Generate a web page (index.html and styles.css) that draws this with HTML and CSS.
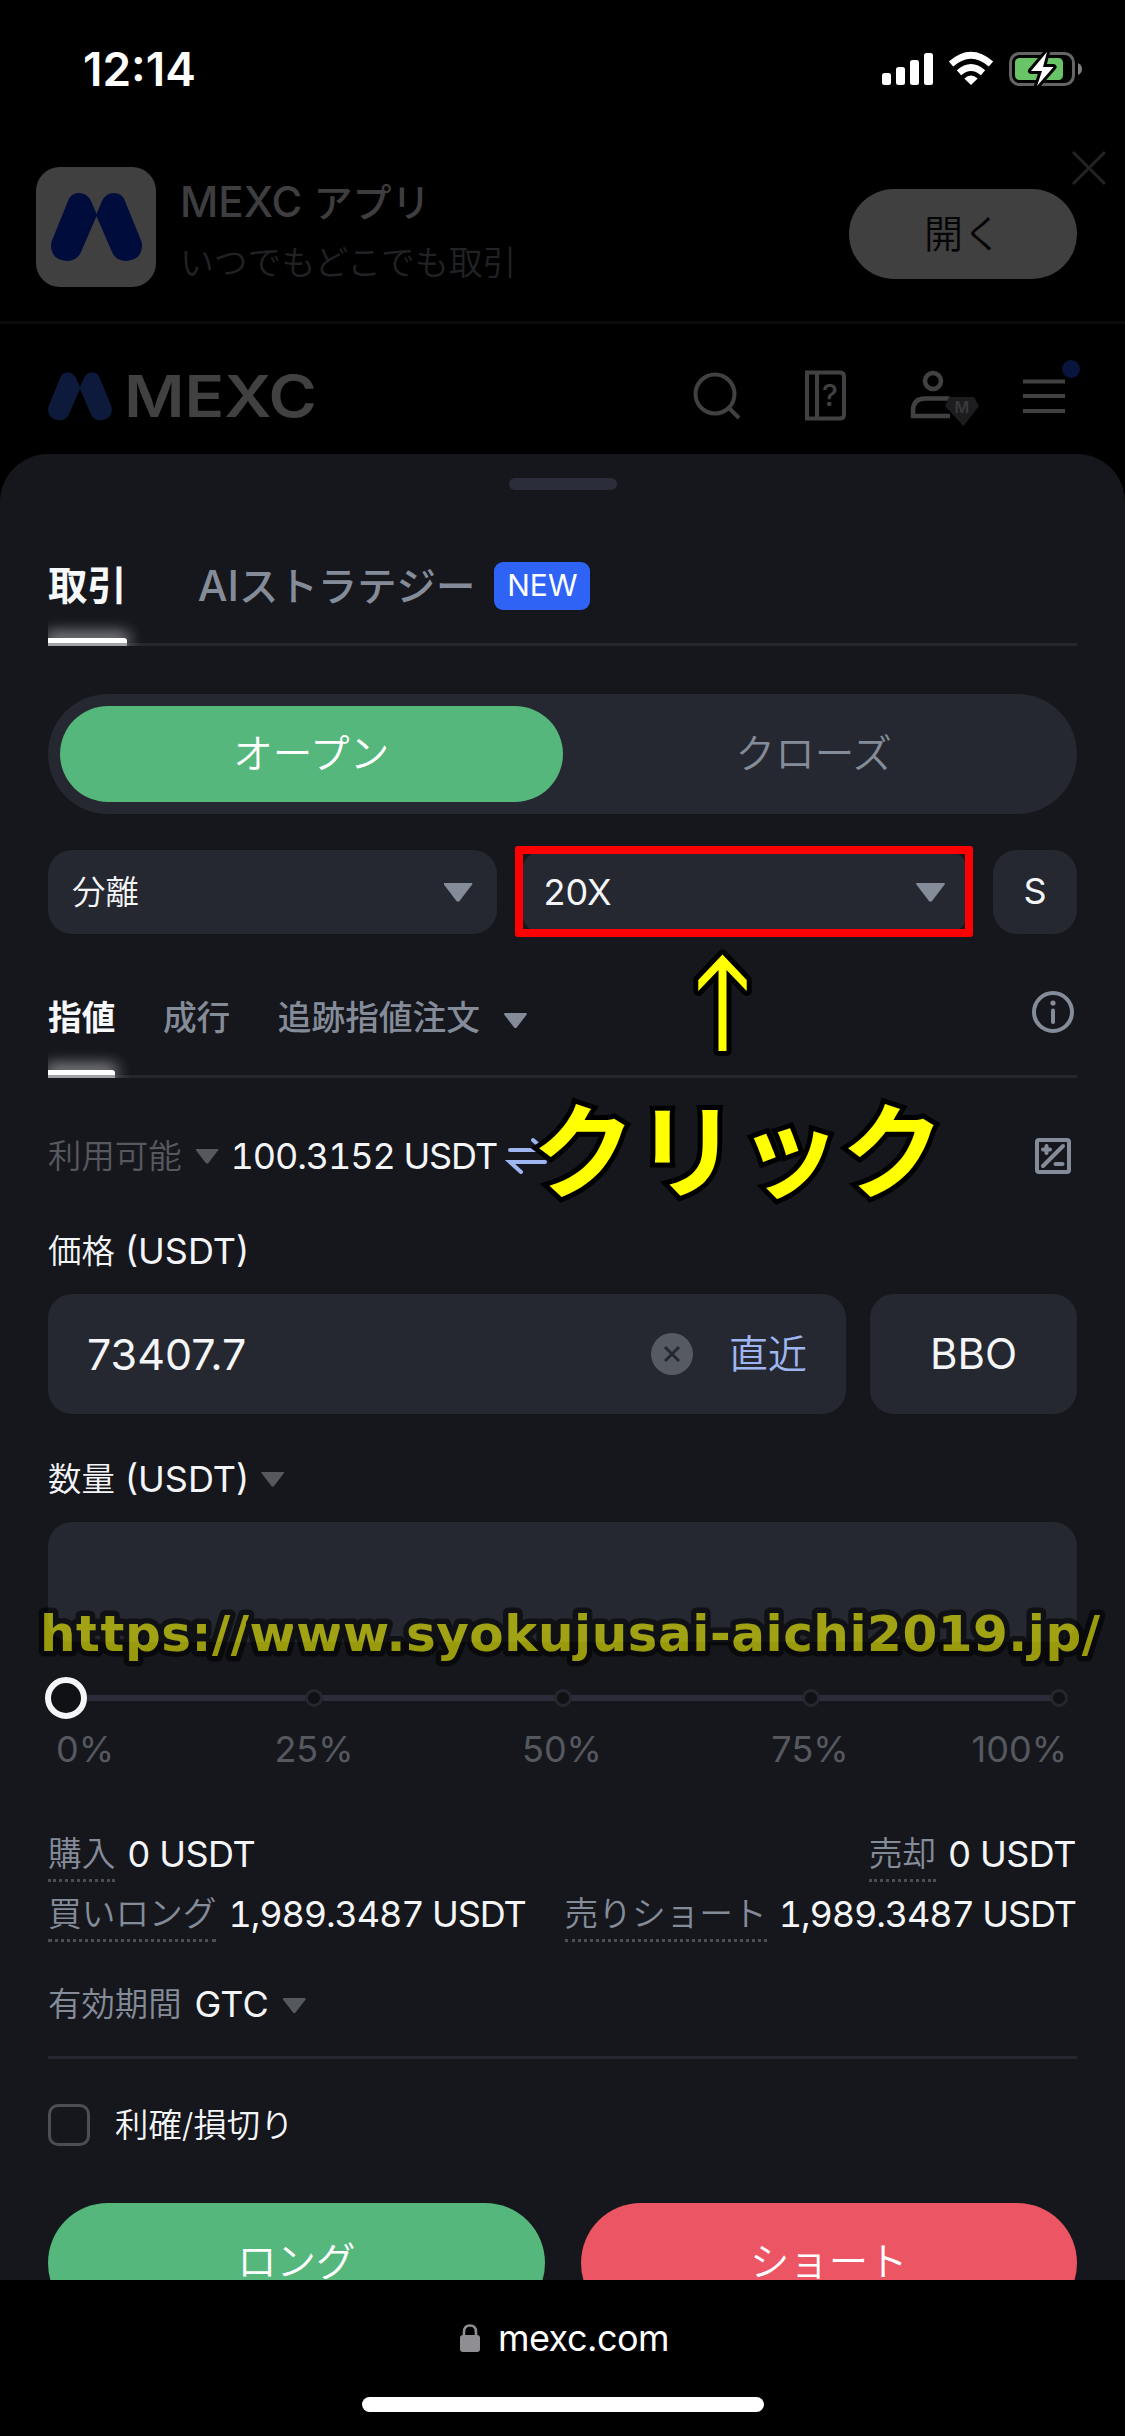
FILE: index.html
```html
<!DOCTYPE html>
<html lang="ja">
<head>
<meta charset="utf-8">
<title>MEXC</title>
<link rel="stylesheet" href="styles.css">
</head>
<body>
<div class="phone">
  <div class="status">
    <span class="clock">12:14</span>
    <svg class="status-icons" width="204" height="40" viewBox="0 0 204 40">
      <g fill="#fff">
        <rect x="2" y="24" width="9" height="12" rx="2.5"/><rect x="16" y="18" width="9" height="18" rx="2.5"/><rect x="30" y="11" width="9" height="25" rx="2.5"/><rect x="44" y="4" width="9" height="32" rx="2.5"/>
        <path d="M91 36 L84.3 29.4 Q91 23.6 97.7 29.4 Z"/>
      </g>
      <g fill="none" stroke="#fff" stroke-width="6.6"><path d="M79 23.8 Q91 13.2 103 23.8"/><path d="M71 15 Q91 -2.6 111 15"/></g>
      <rect x="130.500" y="4.500" width="63" height="31" rx="9" fill="none" stroke="#656565" stroke-width="3"/>
      <path d="M198 14 q4 2 4 6 q0 4 -4 6z" fill="#808080"/>
      <rect x="135" y="9" width="48" height="22" rx="4.500" fill="#68c466"/>
      <path d="M167 3 L151 22 L162 22 L157 37 L173.500 18 L163 18 Z" fill="#fff" stroke="#000" stroke-width="6" stroke-linejoin="round" paint-order="stroke"/>
    </svg>
  </div>

  <div class="promo">
    <svg class="app-icon" width="120" height="120" viewBox="0 0 120 120">
      <rect width="120" height="120" rx="24" fill="#404040"/>
      <g fill="#000c3c"><path d="M43 26 Q51 26 55 34 L61 48 L45 85 Q41 94 31 94 Q15 93 15 78 Q15 75 17 71 L32 34 Q35 26 43 26Z"/><path d="M78 26 Q70 26 66 34 L60 48 L76 85 Q80 94 90 94 Q106 93 106 78 Q106 75 104 71 L89 34 Q86 26 78 26Z"/></g>
    </svg>
    <div class="promo-copy">
      <div class="promo-title">MEXC <span class="ja39">アプリ</span></div>
      <div class="promo-sub">いつでもどこでも取引</div>
    </div>
    <div class="open-btn">開く</div>
    <svg class="close" width="34" height="34" viewBox="0 0 34 34"><path d="M1 1 33 33M33 1 1 33" stroke="#222326" stroke-width="3"/></svg>
  </div>

  <div class="site-head">
    <svg class="brand" width="280" height="66" viewBox="0 -6 280 66">
      <g transform="translate(-10.400 -17.600) scale(.7)" fill="#0d1a3c"><path d="M43 26 Q51 26 55 34 L61 48 L45 85 Q41 94 31 94 Q15 93 15 78 Q15 75 17 71 L32 34 Q35 26 43 26Z"/><path d="M78 26 Q70 26 66 34 L60 48 L76 85 Q80 94 90 94 Q106 93 106 78 Q106 75 104 71 L89 34 Q86 26 78 26Z"/></g>
      <text x="76" y="45" textLength="193" lengthAdjust="spacingAndGlyphs" class="wordmark">MEXC</text>
    </svg>
    <svg class="head-icons" width="400" height="66" viewBox="0 0 400 66" fill="none" stroke="#414141" stroke-width="4">
      <circle cx="35" cy="34" r="19.500"/><path d="M49 48 L59 58"/>
      <path d="M127 12.500H160Q164 12.500 164 16.500V54.500Q164 58.500 160 58.500H127Z M137 12V59"/>
      <text x="150" y="46" text-anchor="middle" class="q">?</text>
      <circle cx="253" cy="21" r="8" stroke-width="4.500"/><path d="M270 38.500H245Q233 38.500 233 51V56H270" stroke-width="4.500"/>
      <path d="M269 37H294L299 46L283.500 66L265 46Z" fill="#1d1d20" stroke="none"/>
      <text x="282" y="53" text-anchor="middle" class="gem">M</text>
      <path d="M343 21.500H385M343 36H385M343 51H385"/>
      <circle cx="391" cy="9" r="9" fill="#08153c" stroke="none"/>
    </svg>
  </div>

  <div class="sheet">
    <div class="handle"></div>
    <div class="tabs main-tabs">
      <span class="tab on">取引</span>
      <span class="tab ai"><span class="lat">AI</span>ストラテジー</span>
      <span class="new">NEW</span>
    </div>
    <div class="segment"><div class="seg on">オープン</div><div class="seg">クローズ</div></div>
    <div class="selects">
      <div class="select"><span class="ja">分離</span><i class="tri big"></i></div>
      <div class="select"><span class="lev">20X</span><i class="tri big"></i><span class="mark"></span></div>
      <div class="size">S</div>
    </div>
    <div class="tabs order-tabs">
      <span class="tab on">指値</span><span class="tab">成行</span><span class="tab">追跡指値注文</span><i class="tri mid"></i>
      <svg class="info" width="44" height="44" viewBox="0 0 44 44" fill="none" stroke="#858c99" stroke-width="4" stroke-linecap="round"><circle cx="22" cy="22" r="19"/><path d="M22 20.500V32"/><circle cx="22" cy="13" r="2.600" fill="#858c99" stroke="none"/></svg>
    </div>
    <div class="balance">
      <span class="ja dim">利用可能</span><i class="tri dimtri"></i><span class="amount num">100.3152 USDT</span>
      <svg class="swap" width="40" height="36" viewBox="0 0 40 36" fill="none" stroke="#9eb5f2" stroke-width="4" stroke-linecap="round"><path d="M2 12H36L25 2M37 24H2L13 34"/></svg>
      <svg class="calc" width="36" height="36" viewBox="0 0 36 36" fill="none" stroke="#858c99" stroke-width="4" stroke-linecap="round"><rect x="2" y="2" width="32" height="32" rx="2"/><path d="M28 8 8 28M8 11.500H15M11.500 8V15M20.500 26H27.500"/></svg>
    </div>
    <div class="label price-label"><span class="ja">価格</span> (USDT)</div>
    <div class="price-row">
      <div class="input"><span class="price">73407.7</span>
        <svg class="clear" width="42" height="42" viewBox="0 0 42 42"><circle cx="21" cy="21" r="21" fill="#565a61"/><path d="M14 14 28 28M28 14 14 28" stroke="#252830" stroke-width="3"/></svg>
        <span class="last">直近</span></div>
      <div class="bbo">BBO</div>
    </div>
    <div class="label qty-label"><span class="ja">数量</span> (USDT)<i class="tri dimtri"></i></div>
    <div class="qty"></div>
    <div class="slider"><i class="thumb"></i><i class="dot"></i><i class="dot"></i><i class="dot"></i><i class="dot"></i></div>
    <div class="ticks"><span>0%</span><span>25%</span><span>50%</span><span>75%</span><span>100%</span></div>
    <div class="stats first"><div><span class="term">購入</span>0 USDT</div><div><span class="term">売却</span>0 USDT</div></div>
    <div class="stats num"><div><span class="term">買いロング</span>1,989.3487 USDT</div><div><span class="term">売りショート</span>1,989.3487 USDT</div></div>
    <div class="validity"><span class="ja">有効期間</span><span class="gtc">GTC</span><i class="tri dimtri"></i></div>
    <div class="tpsl"><i class="check"></i><span class="ja">利確/損切り</span></div>
    <div class="actions"><div class="long">ロング</div><div class="short">ショート</div></div>
  </div>

  <div class="browser">
    <div class="address"><svg width="20" height="28" viewBox="0 0 20 28"><rect x="0" y="11" width="20" height="17" rx="3" fill="#8e8e93"/><path d="M4 12V8Q4 1.500 10 1.500Q16 1.500 16 8V12" fill="none" stroke="#8e8e93" stroke-width="2.600"/></svg><span>mexc.com</span></div>
    <div class="home"></div>
  </div>

  <svg class="arrow" width="75" height="120" viewBox="0 0 75 120"><path d="M37.500 9.500 61.700 35V46L41.500 25V106H33.500V25L13.300 46V35Z" fill="#ff0" stroke="#000" stroke-width="10" stroke-linejoin="round" paint-order="stroke"/></svg>
  <div class="click">クリック</div>
  <svg class="site-url" width="1125" height="80"><text x="40" y="51" textLength="1060">https://www.syokujusai-aichi2019.jp/</text></svg>
</div>
</body>
</html>
```
FILE: styles.css
```css
* { box-sizing: border-box; }
body { margin: 0; background: #000; }
i { display: block; flex: none; }
svg { display: block; flex: none; overflow: visible; }
.phone { position: relative; width: 1125px; height: 2436px; overflow: hidden; background: #000; color: #f4f5f7; font: 36px/48px Inter, "Noto Sans CJK JP", sans-serif; white-space: nowrap; display: flex; flex-direction: column; }
.ja { font-size: 33.4px; font-weight: 350; }
.ja39 { font-size: 39px; }
.num { font-variant-numeric: tabular-nums; letter-spacing: -1.1px; }

.status { height: 145px; flex: none; padding: 49px 41px 0 83px; display: flex; justify-content: space-between; }
.clock { font-size: 46px; font-weight: 600; line-height: 40px; color: #fff; }

.promo { position: relative; height: 179px; flex: none; border-bottom: 3px solid #0a0b0d; padding: 22px 48px 0 36px; display: flex; }
.promo-copy { margin-left: 24px; flex: 1; }
.promo-title { font-size: 42px; font-weight: 500; line-height: 52px; margin-top: 9px; color: #3e3e40; }
.promo-sub { font-size: 33.8px; font-weight: 350; line-height: 48px; margin-top: 10px; color: #212225; }
.open-btn { width: 228px; height: 90px; margin-top: 22px; border-radius: 45px; background: #404040; color: #050505; font-size: 39px; font-weight: 350; line-height: 90px; text-align: center; }
.close { position: absolute; right: 19px; top: 6px; }

.site-head { height: 130px; flex: none; padding: 36px 0 0 48px; display: flex; justify-content: space-between; }
.brand { margin-top: 6px; }
.head-icons { margin-right: 45px; }
.wordmark { font: 600 58px Inter, sans-serif; fill: #414141; }
.q { font: 500 30px Inter, sans-serif; fill: #414141; stroke: none; }
.gem { font: 600 16px Inter, sans-serif; fill: #39393d; stroke: none; }

.sheet { height: 1826px; flex: none; overflow: hidden; border-radius: 48px 48px 0 0; background: #16171d; padding: 24px 48px 0; display: flex; flex-direction: column; }
.sheet > * { flex: none; }
.handle { width: 108px; height: 12px; border-radius: 6px; background: #2b2d3a; align-self: center; }
.tabs { display: flex; background: linear-gradient(#252730, #252730) bottom / 100% 3px no-repeat; color: #858c99; font-weight: 500; overflow: hidden; }
.tab.on { position: relative; color: #f7f8fa; font-weight: 700; }
.tab.on::after { content: ""; position: absolute; left: 0; right: 0; bottom: 0; height: 8px; border-radius: 0 3px 0 0; background: linear-gradient(#fff 5px, #a2a3a6 5px); box-shadow: 0 -3px 15px 2px rgba(255,255,255,.6); }
.main-tabs { margin-top: 60px; height: 96px; font-size: 39.4px; line-height: 72px; }
.main-tabs .tab { height: 96px; }
.ai { margin-left: 71px; }
.lat { font-size: 42px; }
.new { margin: 12px 0 0 19px; width: 96px; height: 48px; border-radius: 9px; background: #2f63f6; color: #fff; font-size: 30px; font-weight: 400; line-height: 46px; text-align: center; }

.segment { margin-top: 48px; height: 120px; border-radius: 60px; padding: 12px; background: #252830; display: flex; }
.seg { flex: 1; border-radius: 48px; font-size: 39.6px; font-weight: 350; line-height: 96px; text-align: center; color: #858c99; }
.seg.on { background: #55b77b; color: #fff; }

.selects { margin-top: 36px; height: 84px; display: flex; gap: 24px; line-height: 82px; }
.select { position: relative; flex: 1; border-radius: 24px; background: #252830; padding: 0 24px; display: flex; align-items: center; justify-content: space-between; }
.lev { margin-left: -1px; }
.size { width: 84px; border-radius: 24px; background: #252830; text-align: center; }
.mark { position: absolute; left: -6px; top: -4px; width: 458px; height: 91px; border: 8px solid #f00; border-radius: 3px; }
.tri { width: 23px; height: 15px; background: #858c99; clip-path: polygon(3% 0, 97% 0, 100% 8%, 54% 100%, 46% 100%, 0 8%); }
.tri.big { width: 29px; height: 19px; }
.tri.dimtri { background: #55595f; }

.order-tabs { margin-top: 48px; height: 96px; font-size: 33.7px; line-height: 71px; align-items: flex-start; }
.order-tabs .tab { height: 96px; margin-right: 47.5px; }
.tri.mid { margin: 31px 0 0 -23.5px; }
.info { margin: 8px 2px 0 auto; }

.balance { margin-top: 54px; height: 48px; display: flex; align-items: center; }
.dim { color: #55595f; }
.balance .tri { margin-left: 14px; }
.amount { margin-left: 12px; }
.swap { margin-left: 11px; }
.calc { margin-left: auto; margin-right: 6px; }
.label { height: 48px; display: flex; align-items: center; white-space: pre; }
.label .tri { margin-left: 12px; }
.price-label { margin-top: 47px; }
.price-row { margin-top: 19px; height: 120px; display: flex; gap: 24px; font-size: 42px; line-height: 120px; }
.input { flex: 1; border-radius: 24px; background: #252830; padding: 0 39px; display: flex; align-items: center; }
.price { font-size: 43px; }
.clear { margin-left: auto; margin-right: 36px; }
.last { font-size: 39px; font-weight: 350; color: #9eb5f2; }
.bbo { width: 207px; border-radius: 24px; background: #252830; text-align: center; font-size: 42px; }
.qty-label { margin-top: 41px; }
.qty { margin-top: 19px; height: 120px; border-radius: 24px; background: #252830; }
.slider { margin: 32px 9px 0 -3px; height: 48px; display: flex; align-items: center; justify-content: space-between; background: linear-gradient(#2b2d3a, #2b2d3a) center / calc(100% - 20px) 6px no-repeat; }
.thumb { width: 42px; height: 42px; border: 6px solid #f4f5f7; border-radius: 50%; background: #101115; margin-right: -12px; }
.dot { width: 18px; height: 18px; border: 3px solid #252730; border-radius: 50%; background: #101115; }
.ticks { margin: 3px 10px 0 8px; height: 47px; display: grid; grid-template-columns: 134px 248px 248px 248px 1fr; color: #55595f; }
.ticks span { text-align: center; }
.ticks span:first-child { text-align: left; }
.ticks span:last-child { text-align: right; }
.stats { height: 60px; padding-right: 1px; display: flex; justify-content: space-between; }
.stats.first { margin-top: 58px; letter-spacing: -.5px; }
.stats > div { display: flex; }
.term { font-size: 33.7px; font-weight: 350; letter-spacing: 0; color: #858c99; margin-right: 12px; height: 52px; border-bottom: 3px dotted #4b4e56; }
.validity { height: 109px; padding-top: 30px; border-bottom: 3px solid #252730; display: flex; color: #858c99; }
.gtc { color: #f4f5f7; margin: 0 14px 0 13px; }
.validity .tri { margin-top: 18px; }
.tpsl { margin-top: 45px; height: 42px; display: flex; align-items: center; }
.check { width: 42px; height: 42px; border: 3px solid #4b4e55; border-radius: 10px; margin-right: 25px; }
.actions { margin-top: 57px; height: 120px; display: grid; grid-template-columns: 1fr 1fr; gap: 36px; text-align: center; font-size: 39.4px; font-weight: 350; line-height: 119px; color: #fff; }
.actions div { border-radius: 60px; }
.long { background: #55b77b; }
.short { background: #ec5563; }

.browser { height: 156px; flex: none; display: flex; flex-direction: column; align-items: center; justify-content: space-between; padding: 34px 0 24px; }
.address { display: flex; align-items: center; gap: 18px; padding-left: 4px; letter-spacing: -.5px; color: #fff; }
.home { width: 402px; height: 15px; border-radius: 8px; background: #fff; }

.arrow { position: absolute; left: 685px; top: 945px; }
.click { position: absolute; left: 532px; top: 1086px; font: 700 103px/120px "Noto Sans CJK JP", sans-serif; color: #ff0; -webkit-text-stroke: 10px #000; stroke-linejoin: round; paint-order: stroke fill; }
.site-url { position: absolute; left: 0; top: 1600px; opacity: .57; font: 700 50px "DejaVu Sans", sans-serif; fill: #ff0; stroke: #000; stroke-width: 11px; stroke-linejoin: round; paint-order: stroke; }
```
